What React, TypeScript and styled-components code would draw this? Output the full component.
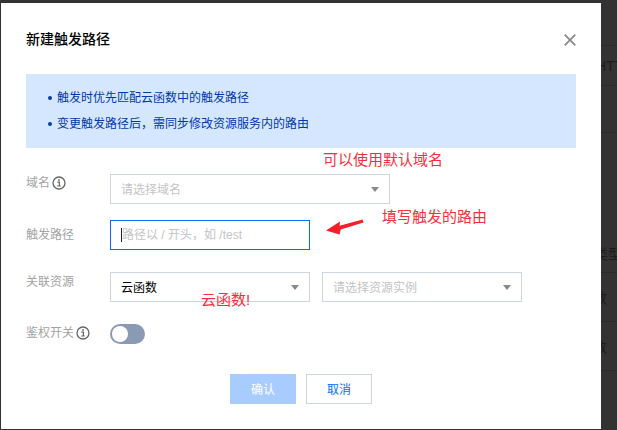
import styled, { createGlobalStyle } from "styled-components";

const GlobalStyle = createGlobalStyle`
  html, body {
    margin: 0;
    padding: 0;
    background: #333;
  }
  * {
    box-sizing: border-box;
  }
`;

const InfoIcon = () => (
  <svg width="14" height="14" viewBox="0 0 14 14" fill="none">
    <circle cx="7" cy="7" r="6" stroke="#666" strokeWidth="1.3" />
    <rect x="6.2" y="3.2" width="1.6" height="1.6" fill="#666" />
    <path d="M5.4 6.1h2v3.6M5.2 10h3.6" stroke="#666" strokeWidth="1.2" />
  </svg>
);

const CloseIcon = () => (
  <svg width="12" height="12" viewBox="0 0 12 12" fill="none">
    <path d="M0.7 0.7L11.3 11.3M11.3 0.7L0.7 11.3" stroke="#888" strokeWidth="1.7" />
  </svg>
);

const ArrowMark = () => (
  <svg width="38" height="16" viewBox="0 0 38 16" fill="none">
    <path
      d="M0 11.5L14 2.5L13.6 6.8L36.5 0.6L37.6 3.4L14.8 10.6L13.5 15.4Z"
      fill="#f3202c"
    />
  </svg>
);

const Select: React.FC<{ value?: string; placeholder?: string; width: number }> = ({
  value,
  placeholder,
  width,
}) => (
  <SelectBox $width={width}>
    {value ? <SelectText>{value}</SelectText> : <Placeholder>{placeholder}</Placeholder>}
    <Caret />
  </SelectBox>
);

const App = () => {
  return (
    <Page>
      <GlobalStyle />
      <Modal>
        <Header>
          <Title>新建触发路径</Title>
          <CloseButton type="button">
            <CloseIcon />
          </CloseButton>
        </Header>
        <Notice>
          <li>触发时优先匹配云函数中的触发路径</li>
          <li>变更触发路径后，需同步修改资源服务内的路由</li>
        </Notice>
        <Form>
          <Row $gap={16}>
            <Label $top={1}>
              域名
              <InfoIcon />
            </Label>
            <Select width={280} placeholder="请选择域名" />
          </Row>
          <Row $gap={22}>
            <Label $top={7}>触发路径</Label>
            <PathField>
              <TextCursor />
              <PathInput readOnly placeholder="路径以 / 开头，如 /test" />
            </PathField>
          </Row>
          <Row $gap={22}>
            <Label $top={2}>关联资源</Label>
            <Controls>
              <Select width={200} value="云函数" />
              <Select width={200} placeholder="请选择资源实例" />
            </Controls>
          </Row>
          <Row $gap={30}>
            <Label $top={1}>
              鉴权开关
              <InfoIcon />
            </Label>
            <Switch />
          </Row>
        </Form>
        <Footer>
          <ConfirmButton type="button">确认</ConfirmButton>
          <CancelButton type="button">取消</CancelButton>
        </Footer>
        <Note $left={322} $top={147}>可以使用默认域名</Note>
        <Note $left={381} $top={204}>填写触发的路由</Note>
        <Note $left={200} $top={287}>云函数!</Note>
        <ArrowSpot>
          <ArrowMark />
        </ArrowSpot>
      </Modal>
      <BackTable>
        <BackRow $height={46} />
        <BackRow $height={40} $text="HTTP" $shift={-5} />
        <BackRow $height={47} />
        <BackRow $height={21} $plain />
        <BackRow $height={119} $text="类型" $shift={-7} $align="flex-end" />
        <BackRow $height={49} $text="云函数" $shift={-36} />
        <BackRow $height={49} $text="云函数" $shift={-36} />
      </BackTable>
    </Page>
  );
};
export default App;

const Page = styled.div`
  width: 617px;
  height: 430px;
  padding: 3px 0 1px 1px;
  display: flex;
  overflow: hidden;
  background: #333;
  font-family: "Liberation Sans", "Noto Sans CJK SC", sans-serif;
  font-size: 12px;
  color: #000;
`;

const Modal = styled.div`
  position: relative;
  width: 600px;
  flex-shrink: 0;
  background: #fff;
  padding: 26px 25px 0;
`;

const Header = styled.div`
  height: 20px;
  display: flex;
  align-items: center;
  justify-content: space-between;
  margin-bottom: 25px;
`;

const Title = styled.h3`
  margin: 0;
  font-size: 14px;
  font-weight: 500;
  line-height: 20px;
  color: #000;
`;

const CloseButton = styled.button`
  border: 0;
  padding: 0;
  background: none;
  display: flex;
  margin-top: 2px;
`;

const Notice = styled.ul`
  margin: 0 0 26px;
  padding: 11px 0 11px 31px;
  list-style: none;
  background: #d5e7ff;
  color: #0038a8;

  li {
    position: relative;
    line-height: 26px;
  }
  li::before {
    content: "";
    position: absolute;
    left: -9px;
    top: 11px;
    width: 4px;
    height: 4px;
    border-radius: 50%;
    background: #00409f;
  }
`;

const Form = styled.div`
  display: flex;
  flex-direction: column;
`;

const Row = styled.div<{ $gap: number }>`
  display: flex;
  align-items: flex-start;
  margin-bottom: ${(p) => p.$gap}px;
`;

const Label = styled.label<{ $top?: number }>`
  width: 84px;
  flex-shrink: 0;
  display: flex;
  align-items: center;
  gap: 2px;
  height: 16px;
  margin-top: ${(p) => p.$top ?? 0}px;
  color: #a3a3a3;
  line-height: 16px;
`;

const Controls = styled.div`
  display: flex;
  gap: 12px;
`;

const SelectBox = styled.div<{ $width: number }>`
  width: ${(p) => p.$width}px;
  height: 30px;
  padding: 0 10px;
  display: flex;
  align-items: center;
  justify-content: space-between;
  border: 1px solid #cfd5de;
  background: #fff;
`;

const SelectText = styled.span`
  margin-top: -1px;
`;

const Placeholder = styled.span`
  margin-top: -1px;
  color: #c4c4c4;
`;

const Caret = styled.i`
  width: 0;
  height: 0;
  border-style: solid;
  border-width: 5px 4px 0;
  border-color: #888 transparent transparent;
`;

const PathField = styled.div`
  width: 200px;
  height: 30px;
  padding: 0 10px;
  display: flex;
  align-items: center;
  border: 1px solid #006eff;
  background: #fff;
`;

const TextCursor = styled.span`
  width: 1px;
  height: 14px;
  flex-shrink: 0;
  background: #222;
`;

const PathInput = styled.input`
  flex: 1;
  min-width: 0;
  border: 0;
  outline: 0;
  padding: 0;
  font: inherit;
  background: transparent;

  &::placeholder {
    color: #c4c4c4;
    opacity: 1;
  }
`;

const Switch = styled.span`
  width: 35px;
  height: 20px;
  padding: 2px;
  border-radius: 10px;
  background: #8a9ab3;
  display: block;

  &::before {
    content: "";
    display: block;
    width: 16px;
    height: 16px;
    border-radius: 50%;
    background: #fff;
  }
`;

const Footer = styled.div`
  display: flex;
  justify-content: center;
  gap: 10px;
`;

const ConfirmButton = styled.button`
  width: 66px;
  height: 30px;
  padding: 0 0 1px;
  border: 0;
  background: #a9ccff;
  color: #fff;
  font: inherit;
`;

const CancelButton = styled.button`
  width: 66px;
  height: 30px;
  padding: 0 0 1px;
  border: 1px solid #cfd5de;
  background: #fff;
  color: #006eff;
  font: inherit;
`;

const Note = styled.span<{ $left: number; $top: number }>`
  position: absolute;
  left: ${(p) => p.$left}px;
  top: ${(p) => p.$top}px;
  font-size: 15px;
  line-height: 20px;
  color: #f5303d;
  white-space: nowrap;
`;

const ArrowSpot = styled.div`
  position: absolute;
  left: 325px;
  top: 216px;
  display: flex;
`;

const BackTable = styled.div`
  flex: 1;
  min-width: 0;
  margin-top: -3px;
  overflow: hidden;
  background: #333;
  color: #1c1c1c;
  font-size: 14px;
`;

const BackRow = styled.div.attrs<{ $text?: string }>((p) => ({
  children: p.$text,
}))<{
  $height: number;
  $text?: string;
  $shift?: number;
  $plain?: boolean;
  $align?: string;
}>`
  height: ${(p) => p.$height}px;
  margin-left: ${(p) => p.$shift ?? 0}px;
  display: flex;
  align-items: ${(p) => p.$align ?? "center"};
  padding-bottom: ${(p) => (p.$align ? "9px" : "0")};
  white-space: nowrap;
  border-bottom: ${(p) => (p.$plain ? "0" : "1px solid #2b2b2b")};
`;
